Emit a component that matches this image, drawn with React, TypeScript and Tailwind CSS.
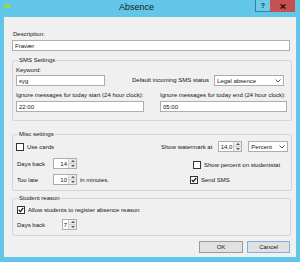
import { ReactNode } from 'react';

const font = { fontFamily: '"Liberation Sans", Arial, sans-serif' };

function TextBox({ value, className }: { value: string; className: string }) {
  return (
    <div className={`shrink-0 h-[11px] bg-white border border-[#abadb3] flex items-center pl-[2px] leading-none ${className}`}>
      {value}
    </div>
  );
}

function Spinner({ value, className }: { value: string; className: string }) {
  return (
    <div className={`shrink-0 h-[11px] bg-white border border-[#abadb3] flex items-stretch ${className}`}>
      <div className="flex-1 flex items-center justify-end pr-[1px] leading-none">{value}</div>
      <div className="w-[8px] flex flex-col border-l border-[#d0d0d0]">
        <div className="flex-1 bg-[#ececec] flex items-center justify-center border-b border-[#d0d0d0]">
          <div className="w-0 h-0 border-l-[2px] border-r-[2px] border-b-[2px] border-l-transparent border-r-transparent border-b-[#555]" />
        </div>
        <div className="flex-1 bg-[#ececec] flex items-center justify-center">
          <div className="w-0 h-0 border-l-[2px] border-r-[2px] border-t-[2px] border-l-transparent border-r-transparent border-t-[#555]" />
        </div>
      </div>
    </div>
  );
}

function Select({ value, className }: { value: string; className: string }) {
  return (
    <div className={`shrink-0 h-[11px] bg-white border border-[#abadb3] flex items-center pl-[2px] pr-[2px] leading-none ${className}`}>
      <span className="flex-1">{value}</span>
      <svg width="6" height="4" viewBox="0 0 6 4">
        <path d="M0.5 0.5 L3 3 L5.5 0.5" fill="none" stroke="#444" strokeWidth="0.9" />
      </svg>
    </div>
  );
}

function Check({ checked, label, className = '' }: { checked?: boolean; label: string; className?: string }) {
  return (
    <div className={`shrink-0 flex items-center gap-[3px] leading-none ${className}`}>
      <div className="w-[8px] h-[8px] bg-white border border-[#333] flex items-center justify-center">
        {checked && (
          <svg width="6" height="6" viewBox="0 0 6 6">
            <path d="M0.8 3 L2.3 4.6 L5.2 1" fill="none" stroke="#111" strokeWidth="1.2" />
          </svg>
        )}
      </div>
      <span>{label}</span>
    </div>
  );
}

function Group({ title, className, children }: { title: string; className: string; children: ReactNode }) {
  return (
    <fieldset className={`border border-[#d5d5d5] rounded-[2px] px-[3px] ${className}`}>
      <legend className="ml-[2px] px-[1px] leading-[8px]">{title}</legend>
      {children}
    </fieldset>
  );
}

export default function App() {
  return (
    <div className="w-[300px] h-[262px] bg-[#62c6e8] text-[6px] text-[#151515] whitespace-nowrap flex flex-col" style={font}>
      {/* Title bar */}
      <div className="h-[17px] flex items-start">
        <div className="mt-[4px] ml-[4px] w-[6px] h-[4px] bg-[#9bd64e] rounded-[1px]" />
        <div className="flex-1 text-center text-[9px] leading-[17px] text-[#1a1a1a] -mt-[1px] pl-[8px]">Absence</div>
        <div className="flex mr-[5px]">
          <div className="w-[15px] h-[12px] bg-[#6dcbea] border-l border-b border-[#3d7f98] flex items-center justify-center text-[7px] font-bold text-[#1c2a33] leading-none">?</div>
          <div className="w-[25px] h-[12px] bg-[#c75050] flex items-center justify-center">
            <svg width="6" height="5" viewBox="0 0 6 5">
              <path d="M0.7 0.5 L5.3 4.5 M5.3 0.5 L0.7 4.5" stroke="#2a1010" strokeWidth="1.4" />
            </svg>
          </div>
        </div>
      </div>

      {/* Client area */}
      <div className="mx-[4px] h-[240px] bg-[#f0f0f0] pl-[8px] pr-[4px] pt-[13px] flex flex-col">
        <div className="leading-[8px] pl-[1px]">Description:</div>
        <TextBox value="Fravær" className="mt-[2px] w-[278px]" />

        <Group title="SMS Settings" className="mt-[5px] w-[280px] pb-[8px]">
          <div className="flex items-end mt-[2px]">
            <div className="shrink-0 flex flex-col">
              <div className="leading-[8px]">Keyword:</div>
              <TextBox value="syg" className="mt-[1px] w-[89px]" />
            </div>
            <div className="shrink-0 ml-[27px] leading-none mb-[3px]">Default incoming SMS status</div>
            <Select value="Legal absence" className="ml-[5px] w-[70px]" />
          </div>
          <div className="flex mt-[5px] gap-[16px]">
            <div className="shrink-0 w-[128px] flex flex-col">
              <div className="leading-[8px]">Ignore messages for today start (24 hour clock):</div>
              <TextBox value="22:00" className="mt-[2px] w-[128px]" />
            </div>
            <div className="shrink-0 w-[127px] flex flex-col">
              <div className="leading-[8px]">Ignore messages for today end (24 hour clock):</div>
              <TextBox value="05:00" className="mt-[2px] w-[127px]" />
            </div>
          </div>
        </Group>

        <Group title="Misc settings" className="mt-[9px] w-[280px] pb-[5px]">
          <div className="flex items-center h-[11px] mt-[3px]">
            <Check label="Use cards" className="w-[145px]" />
            <span className="shrink-0 leading-none">Show watermark at</span>
            <Spinner value="14,0" className="ml-[6px] w-[24px]" />
            <Select value="Percent" className="ml-[6px] w-[40px]" />
          </div>
          <div className="flex items-center h-[11px] mt-[6px]">
            <span className="shrink-0 w-[37px] pl-[1px] leading-none">Days back</span>
            <Spinner value="14" className="w-[24px]" />
            <Check label="Show percent on studentstat" className="ml-[116px] mt-[2px]" />
          </div>
          <div className="flex items-center h-[11px] mt-[5px]">
            <span className="shrink-0 w-[37px] pl-[1px] leading-none">Too late</span>
            <Spinner value="10" className="w-[24px]" />
            <span className="shrink-0 w-[113px] pl-[3px] leading-none">in minutes.</span>
            <Check checked label="Send SMS" />
          </div>
        </Group>

        <Group title="Student reason" className="mt-[3px] w-[279px] pb-[5px]">
          <Check checked label="Allow students to register absence reason" className="mt-[4px] ml-[1px]" />
          <div className="flex items-center h-[11px] mt-[5px]">
            <span className="shrink-0 w-[46px] pl-[1px] leading-none">Days back</span>
            <Spinner value="7" className="w-[15px]" />
          </div>
        </Group>

        <div className="flex justify-end gap-[4px] mt-[5px] pr-[2px]">
          <div className="w-[44px] h-[12px] bg-[#e1e1e1] border border-[#9a9a9a] flex items-center justify-center leading-none">OK</div>
          <div className="w-[43px] h-[12px] bg-[#e1e1e1] border border-[#7fb0dd] flex items-center justify-center leading-none">Cancel</div>
        </div>
      </div>
    </div>
  );
}
